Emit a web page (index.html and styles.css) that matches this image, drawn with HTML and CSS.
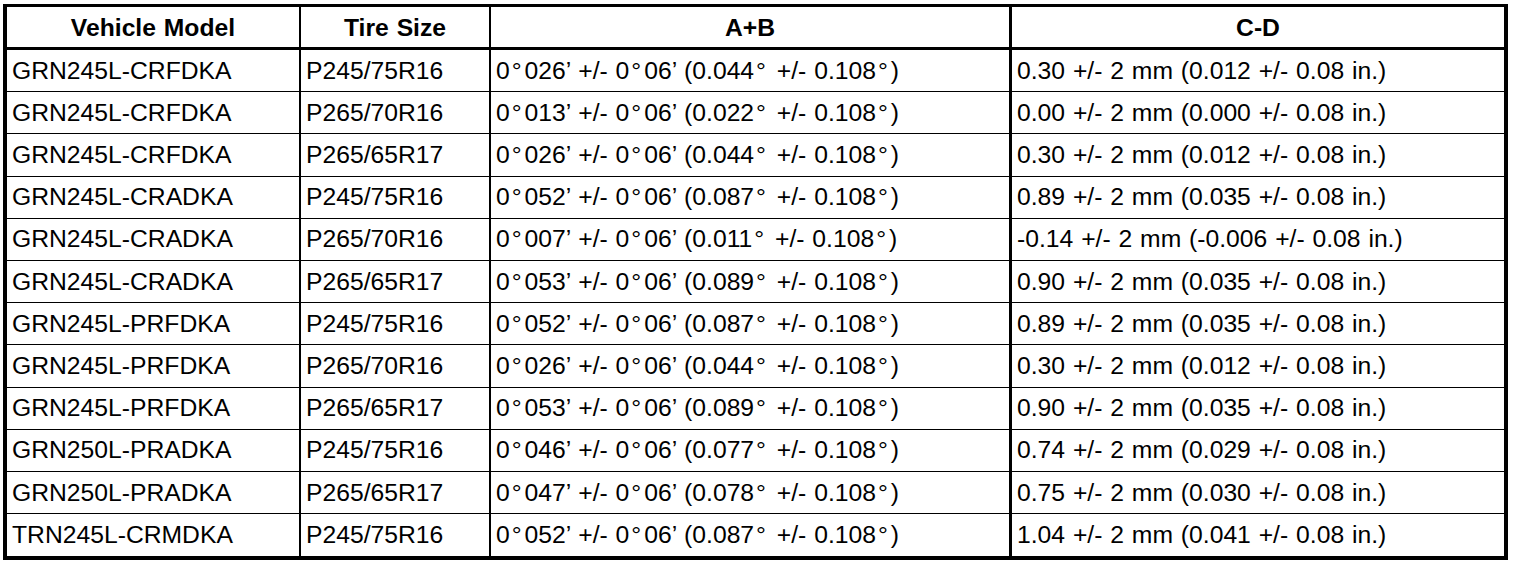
FILE: index.html
```html
<!DOCTYPE html>
<html lang="en">
<head>
<meta charset="UTF-8" />
<title>Wheel Alignment Specifications</title>
<link rel="stylesheet" href="styles.css">
</head>
<body>
  <table class="spec-table">
    <colgroup>
      <col class="c-model">
      <col class="c-tire">
      <col class="c-ab">
      <col class="c-cd">
    </colgroup>
    <thead>
      <tr>
        <th>Vehicle Model</th>
        <th>Tire Size</th>
        <th>A+B</th>
        <th>C-D</th>
      </tr>
    </thead>
    <tbody id="specRows"></tbody>
  </table>

<script>
  // model, tire, A+B minutes, A+B degrees, C-D mm, C-D in
  const rows = [
    ['GRN245L-CRFDKA', 'P245/75R16', '026', '0.044', '0.30', '0.012'],
    ['GRN245L-CRFDKA', 'P265/70R16', '013', '0.022', '0.00', '0.000'],
    ['GRN245L-CRFDKA', 'P265/65R17', '026', '0.044', '0.30', '0.012'],
    ['GRN245L-CRADKA', 'P245/75R16', '052', '0.087', '0.89', '0.035'],
    ['GRN245L-CRADKA', 'P265/70R16', '007', '0.011', '-0.14', '-0.006'],
    ['GRN245L-CRADKA', 'P265/65R17', '053', '0.089', '0.90', '0.035'],
    ['GRN245L-PRFDKA', 'P245/75R16', '052', '0.087', '0.89', '0.035'],
    ['GRN245L-PRFDKA', 'P265/70R16', '026', '0.044', '0.30', '0.012'],
    ['GRN245L-PRFDKA', 'P265/65R17', '053', '0.089', '0.90', '0.035'],
    ['GRN250L-PRADKA', 'P245/75R16', '046', '0.077', '0.74', '0.029'],
    ['GRN250L-PRADKA', 'P265/65R17', '047', '0.078', '0.75', '0.030'],
    ['TRN245L-CRMDKA', 'P245/75R16', '052', '0.087', '1.04', '0.041'],
  ];

  const deg = '<span class="dg">°</span>';
  const tbody = document.getElementById('specRows');

  rows.forEach(([model, tire, min, d, mm, inch]) => {
    const tr = document.createElement('tr');
    tr.innerHTML =
      `<td>${model}</td>` +
      `<td>${tire}</td>` +
      `<td>0${deg}${min}’ +/- 0${deg}06’ (${d}${deg} +/- 0.108${deg})</td>` +
      `<td>${mm} +/- 2 mm (${inch} +/- 0.08 in.)</td>`;
    tbody.appendChild(tr);
  });
</script>
</body>
</html>
```

FILE: styles.css
```css
* {
  box-sizing: border-box;
  margin: 0;
  padding: 0;
}
body {
  background: #fff;
  color: #000;
  font-family: 'Liberation Sans', Arial, Helvetica, sans-serif;
  padding: 4px 0 0 3px;
}
.spec-table {
  width: 1505px;
  table-layout: fixed;
  border-collapse: separate;
  border-spacing: 0;
  border: 4px solid #000;
  border-top-width: 3px;
  font-size: 24.7px;
  word-spacing: 1px;
}
col.c-model { width: 294px; }
col.c-tire  { width: 190px; }
col.c-ab    { width: 521px; }
col.c-cd    { width: 492px; }

.spec-table th,
.spec-table td {
  border-right: 2px solid #000;
  white-space: nowrap;
  vertical-align: middle;
  line-height: 1;
}
.spec-table th:last-child,
.spec-table td:last-child {
  border-right: none;
}
.spec-table th {
  height: 43px;
  font-weight: 700;
  text-align: center;
  border-bottom: 3px solid #000;
  padding-top: 2px;
}
.spec-table td {
  height: 42.2px;
  text-align: left;
  padding: 1px 0 0 5px;
  border-bottom: 1px solid #000;
}
.spec-table tbody tr:last-child td {
  border-bottom: none;
  height: 42px;
}
.spec-table td:nth-child(3),
.spec-table th:nth-child(3) {
  border-right-width: 3px;
}
.dg {
  margin: 0 3px 0 2px;
}
```
